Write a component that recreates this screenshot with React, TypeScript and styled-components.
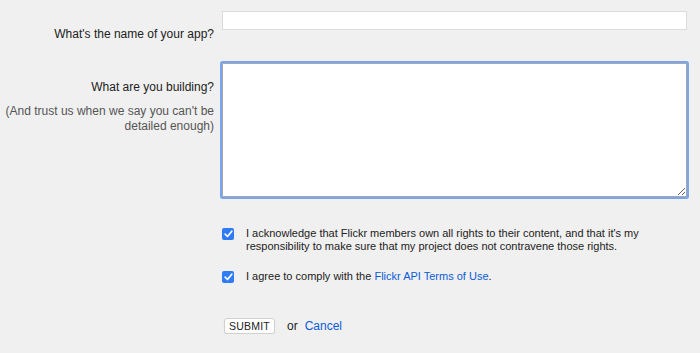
import React from "react";
import styled, { createGlobalStyle } from "styled-components";

const Global = createGlobalStyle`
  html, body {
    margin: 0;
    padding: 0;
    background: #f0f0f0;
  }
  body {
    font-family: "Liberation Sans", Arial, Helvetica, sans-serif;
    font-size: 12px;
    color: #222;
  }
`;

const Form = styled.form`
  display: grid;
  grid-template-columns: 214px 465px;
  column-gap: 8px;
  padding-top: 11px;
`;

const Label = styled.div<{ $top: number }>`
  text-align: right;
  padding-top: ${(p) => p.$top}px;
  line-height: 14px;
  font-size: 12px;
  color: #222;
`;

const Hint = styled.div`
  margin-top: 10px;
  color: #555;
  line-height: 15px;
`;

const TextInput = styled.input`
  box-sizing: border-box;
  display: block;
  width: 465px;
  height: 19px;
  margin: 0;
  border: 1px solid #dcdcdc;
  background: #fff;
  padding: 0 4px;
  font: inherit;
`;

const Area = styled.textarea`
  box-sizing: border-box;
  display: block;
  width: 465px;
  height: 134px;
  margin: 22px 0 0;
  border: 1px solid #a9a9a9;
  border-radius: 1px;
  background: #fff;
  padding: 2px;
  font: inherit;
  outline: none;
  box-shadow: 0 0 0 2px #78a5f0;
  resize: both;
`;

const Checks = styled.div`
  grid-column: 2;
  display: flex;
  flex-direction: column;
  gap: 17px;
  margin-top: 30px;
`;

const CheckRow = styled.label`
  display: flex;
  align-items: flex-start;
  gap: 12px;
  font-size: 11px;
  line-height: 13px;
  color: #222;
`;

const Box = styled.span`
  flex: none;
  width: 12px;
  height: 12px;
  margin-top: 1px;
  border-radius: 2px;
  background: #2f7bf5;
  display: flex;
  align-items: center;
  justify-content: center;
`;

const CheckText = styled.span`
  width: 420px;
`;

const Link = styled.a`
  color: #0b5bd8;
  text-decoration: none;
`;

const Actions = styled.div`
  grid-column: 2;
  display: flex;
  align-items: center;
  gap: 12px;
  margin-top: 35px;
  padding-left: 2px;
`;

const Button = styled.button`
  box-sizing: border-box;
  height: 16px;
  width: 51px;
  padding: 0;
  background: #fff;
  border: 1px solid #d0d0d0;
  border-radius: 3px;
  box-shadow: 0 1px 1px rgba(0, 0, 0, 0.08);
  font-family: "Liberation Sans", Arial, sans-serif;
  font-size: 10.5px;
  letter-spacing: 0.2px;
  color: #222;
  line-height: 14px;
`;

const Or = styled.span`
  color: #222;
  font-size: 12px;
`;

const CancelLink = styled(Link)`
  font-size: 12px;
  margin-left: -5px;
`;

const Check = () => (
  <Box>
    <svg width="9" height="8" viewBox="0 0 9 8">
      <path d="M1.2 4.2 L3.5 6.5 L7.8 1.2" fill="none" stroke="#fff" strokeWidth="1.7" strokeLinecap="round" strokeLinejoin="round" />
    </svg>
  </Box>
);

export default function App() {
  return (
    <>
      <Global />
      <Form onSubmit={(e) => e.preventDefault()}>
        <Label $top={16}>What's the name of your app?</Label>
        <div>
          <TextInput type="text" />
        </div>
        <Label $top={39}>
          What are you building?
          <Hint>(And trust us when we say you can't be detailed enough)</Hint>
        </Label>
        <div>
          <Area />
        </div>
        <Checks>
          <CheckRow>
            <Check />
            <CheckText>
              I acknowledge that Flickr members own all rights to their content, and that it's my responsibility to make sure that my project does not contravene those rights.
            </CheckText>
          </CheckRow>
          <CheckRow>
            <Check />
            <CheckText>
              I agree to comply with the <Link href="#">Flickr API Terms of Use</Link>.
            </CheckText>
          </CheckRow>
        </Checks>
        <Actions>
          <Button type="submit">SUBMIT</Button>
          <Or>or</Or>
          <CancelLink href="#">Cancel</CancelLink>
        </Actions>
      </Form>
    </>
  );
}
